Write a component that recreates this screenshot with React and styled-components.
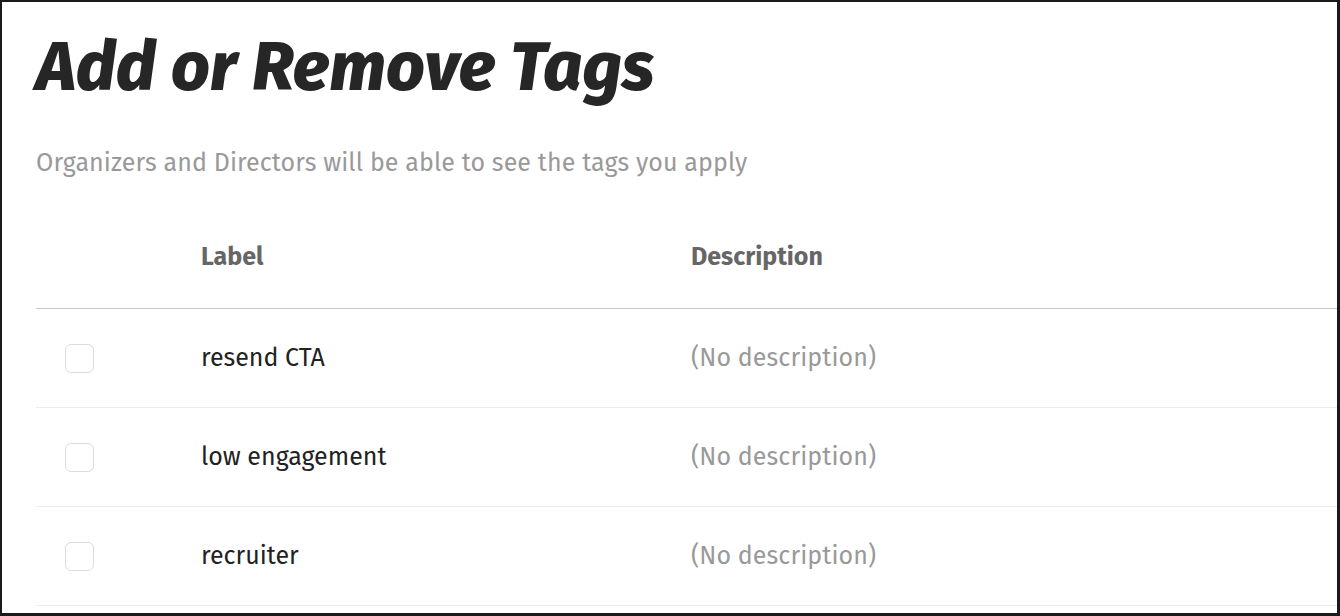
import React from 'react';
import styled, { createGlobalStyle } from 'styled-components';

const GlobalStyle = createGlobalStyle`
  html, body {
    margin: 0;
    padding: 0;
    background: #fff;
  }
  body {
    font-family: "Fira Sans", "Open Sans", "Noto Sans", sans-serif;
  }
  * { box-sizing: border-box; }
`;

const tags = [
  { label: 'resend CTA', description: '' },
  { label: 'low engagement', description: '' },
  { label: 'recruiter', description: '' },
];

export default function App() {
  return (
    <>
      <GlobalStyle />
      <Frame>
        <Title>Add or Remove Tags</Title>
        <Subtitle>Organizers and Directors will be able to see the tags you apply</Subtitle>
        <Table>
          <HeaderRow>
            <CheckCell />
            <HeadCell>Label</HeadCell>
            <HeadCell>Description</HeadCell>
          </HeaderRow>
          {tags.map((tag) => (
            <Row key={tag.label}>
              <CheckCell>
                <Checkbox type="checkbox" aria-label={tag.label} />
              </CheckCell>
              <LabelCell>{tag.label}</LabelCell>
              <DescCell empty={!tag.description}>
                {tag.description || '(No description)'}
              </DescCell>
            </Row>
          ))}
        </Table>
      </Frame>
    </>
  );
}

const Frame = styled.div`
  width: 1340px;
  height: 616px;
  border: 2px solid #1a1a1a;
  border-right-width: 3px;
  border-bottom-width: 3px;
  padding: 20px 0 0 34px;
  overflow: hidden;
`;

const Title = styled.h1`
  margin: 0;
  font-size: 68px;
  line-height: 90px;
  font-weight: 800;
  font-style: italic;
  color: #262626;
  letter-spacing: 0.2px;
`;

const Subtitle = styled.p`
  margin: 36px 0 0;
  font-size: 25px;
  line-height: 30px;
  color: #999;
  letter-spacing: 0.1px;
`;

const Table = styled.div`
  margin-top: 33px;
`;

const HeaderRow = styled.div`
  display: grid;
  grid-template-columns: 165px 490px 1fr;
  align-items: center;
  height: 98px;
  padding-bottom: 6px;
  border-bottom: 1px solid #c8c8c8;
  line-height: 30px;
`;

const Row = styled.div`
  display: grid;
  grid-template-columns: 165px 490px 1fr;
  align-items: center;
  height: 99px;
  border-bottom: 1px solid #ececec;
  line-height: 30px;
`;

const CheckCell = styled.div`
  display: flex;
  align-items: center;
  padding-left: 29px;
`;

const Checkbox = styled.input`
  appearance: none;
  margin: 0;
  width: 29px;
  height: 29px;
  border: 1px solid #dcdcdc;
  border-radius: 6px;
  background: #fff;
`;

const HeadCell = styled.div`
  font-size: 25px;
  font-weight: 700;
  color: #666;
`;

const LabelCell = styled.div`
  font-size: 25px;
  color: #222;
`;

const DescCell = styled.div`
  font-size: 25px;
  color: ${(p) => (p.empty ? '#999' : '#222')};
  letter-spacing: 0.1px;
`;
